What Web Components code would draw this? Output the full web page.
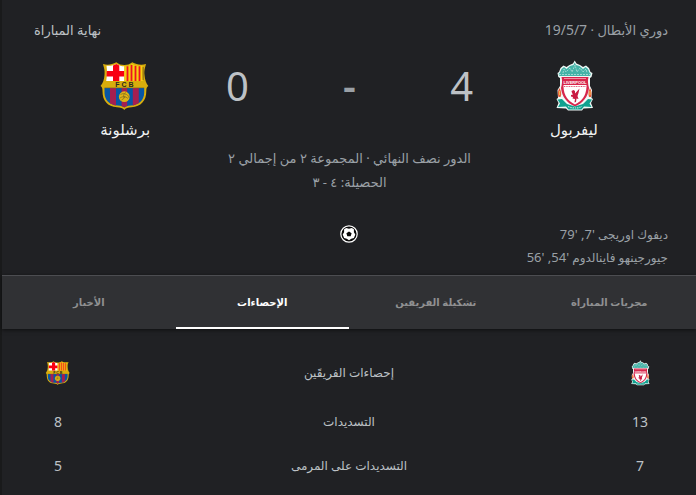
<!DOCTYPE html>
<html lang="ar" dir="rtl">
<head>
<meta charset="utf-8">
<title>ليفربول - برشلونة</title>
<style>
  body { margin: 0; background: #202124; color: #bdc1c6; font: 14px/24px "Noto Sans", "DejaVu Sans", sans-serif; }
</style>
</head>
<body>
<match-card>
  <match-header>
    <a slot="league" href="#league">دوري الأبطال</a>
    <span slot="date">19/5/7</span>
    <span slot="status">نهاية المباراة</span>
    <match-team slot="home" crest="liverpool">ليفربول</match-team>
    <span slot="home-score">4</span>
    <span slot="away-score">0</span>
    <match-team slot="away" crest="barcelona">برشلونة</match-team>
    <span slot="stage">الدور نصف النهائي · المجموعة ٢ من إجمالي ٢</span>
    <span slot="aggregate">الحصيلة: ٤ - ٣</span>
  </match-header>
  <goal-list>
    <goal-entry>ديفوك اوريجى <span slot="minutes">'7, '79</span></goal-entry>
    <goal-entry>جيورجينهو فاينالدوم <span slot="minutes">'54, '56</span></goal-entry>
  </goal-list>
  <tab-bar>
    <tab-item>مجريات المباراة</tab-item>
    <tab-item>تشكيلة الفريقين</tab-item>
    <tab-item active>الإحصاءات</tab-item>
    <tab-item>الأخبار</tab-item>
  </tab-bar>
  <team-stats></team-stats>
</match-card>

<script>
const define = (name, html, setup) => customElements.define(name, class extends HTMLElement {
  constructor() {
    super();
    this.attachShadow({ mode: "open" }).innerHTML = html;
  }
  connectedCallback() { if (setup) setup(this, this.shadowRoot); }
});

const crests = {
  barcelona: `<svg viewBox="0 0 52 52" role="img" aria-label="برشلونة">
    <defs><clipPath id="b"><path d="M5.5 27.5H45.2V33C45 40 40 45 32 45.6 28 46 26.500 46.500 25.300 47.500 24 46.500 22.500 46 18.700 45.600 10.500 45 5.700 40 5.500 33Z"/></clipPath></defs>
    <path d="M4 4C9 5.500 13 4.500 17.300 2.300 20 4.500 22 5 25.300 5 28.500 5 30.500 4.500 33.300 2.300 37.500 4.500 42 5.500 47 4 46 8 45 10 45.500 15 46 20 47 23 49.300 26 48 27 47.300 28 47.300 31 47.300 41 42 46.500 32.500 47.200 29 47.500 26.500 48 25.300 50 24 48 21.500 47.500 18 47.200 8.500 46.500 3.500 41 3.500 31 3.500 28 3 27 1.500 26 4 23 5 20 5.500 15 6 10 5 8 4 4Z" fill="#d8ad0c"/>
    <path d="M7.500 5.700C11.500 6.200 14.500 5.300 17.500 4 20 5.800 22.500 6.300 25.300 6.300V21H7.200C8 16 8.300 10 7.500 5.700Z" fill="#fff"/>
    <path d="M14 5.400 17.500 4 20.300 5.500V21H14ZM7.800 11H25.300V16.500H7.500Z" fill="#f80012"/>
    <path d="M25.300 6.300C28.500 6.300 31 5.500 33.200 4 36.500 5.500 40 6.200 43.500 5.700 42.800 10 43 16 43.800 21H25.300Z" fill="#f5cf13"/>
    <path d="M28.500 6.200V21M32.500 5V21M36.500 5.700V21M40.500 6.300V21" stroke="#ed1220" stroke-width="1.800"/>
    <path d="M44.200 7V20" stroke="#765c14" stroke-width=".800"/>
    <text x="25.500" y="27" text-anchor="middle" font-family="Liberation Sans, sans-serif" font-size="7" font-weight="700" fill="#292b20" direction="ltr">F C B</text>
    <g clip-path="url(#b)"><path d="M4 28H47V48H4Z" fill="#0756a5"/><path d="M11 28h6v20h-6zM22.600 28h5.600v20h-5.600zM33.800 28h6v20h-6z" fill="#a51f50"/></g>
    <path d="M5.500 27.800H45.200" stroke="#796b21" stroke-width=".600"/>
    <circle cx="25.300" cy="36.700" r="5.400" fill="#dfb414"/>
    <path d="M21.500 34.500Q24 32.500 27.500 34.500T30 38M21 38Q25 35 29 38.500M22.500 40Q26 38.500 26 36M27 32.500Q23.500 34 25 38" fill="none" stroke="#806b20" stroke-width=".700"/>
  </svg>`,
  liverpool: `<svg viewBox="0 0 52 52" role="img" aria-label="ليفربول">
    <path d="M25 3.500 26.700.500 28.500 3.500 32 5 35 7 38 5.500 41 8 42.500 12 44.500 13 43.500 17 42 18V26L44 30 43.500 38 45 39 43 43 45 48 35.500 48.500 34 50.500H20L18 48.500 8.500 48 10.500 43 8.500 39 10 38 9.500 30 12 26V18L10.300 17 9.500 13 11 12 12.500 8 15.500 5.500 18.500 7 21.500 5Z" fill="#eff9f7"/>
    <path d="M12 12.500 13.500 9 16 7 18.500 9 22 6 25.500 5 26.700 2.500 28 5 31.500 6 35 9 37.500 7 40 9 41.500 12.500 43 14 42 16H11.500L10.500 14Z" fill="#45b3a8"/>
    <path d="M15 13 16 9 18 12 22 8 24 12 27 5 29 12 32 8 35 12 38 9 39 13M11 14.500H42.500" fill="none" stroke="#c5e8e3" stroke-width=".700" stroke-dasharray="2 1"/>
    <path d="M13.500 17H40.500C39.500 21 40 24 41 28 40 37 35 43 27 46.500 19 43 14 37 13 28 14 24 14.500 21 13.500 17Z" fill="#d7264c"/>
    <path d="M15.500 27H38.500C38 36 34 41 27 44.500 20 41 16 36 15.500 27Z" fill="#fff"/>
    <path d="M15.500 26H38.500" stroke="#fff" stroke-width="2"/><path d="M16 26.500H38" stroke="#d7264c" stroke-width=".800" stroke-dasharray="1 .700"/>
    <path d="M16 18.500H38" stroke="#f5abb9" stroke-width=".800"/>
    <text x="27" y="24" text-anchor="middle" font-family="Liberation Sans, sans-serif" font-size="4" font-weight="700" fill="#fff" direction="ltr">LIVERPOOL</text>
    <path d="M31.500 28.500 30.500 33 29.500 36 30.500 39 28.500 38.500 28 42 26.500 42.500 27 39 24.500 38.500 25 37 23 36.500 23 35 25 34.500 24 33 23.500 31 25.500 30 27 31 27 33.500Z" fill="#c91a42"/>
    <path d="M11.500 28C9.500 31 9.500 34 10.500 37H12.500C14 34 13 31 11.500 28ZM42 28C40.500 31 40 34 41 37H43C44 34 43.500 31 42 28Z" fill="#e85b3b"/>
    <path d="M11.500 31V35M42 31V35" stroke="#f5b650" stroke-width="1.200"/>
    <path d="M9.500 39.500 14 39 19 44 26.800 46.500 35 44 40 39 44 39.500 41.500 43.500 43.500 47 36 46.500 33.500 49.500H20.500L18 46.500 10 47 12 43.500Z" fill="#10a18f"/>
    <path d="M20 46.500Q27 49.500 34 46.500" fill="none" stroke="#bae3dc" stroke-width="1.200" stroke-dasharray="1.500 .800"/>
  </svg>`
};

define("match-card", `<style>
  :host { display: block; min-height: 100vh; box-sizing: border-box; border-left: 2px solid #191a1b; background: #202124; }
</style><slot></slot>`);

define("team-crest", `<style>
  :host { display: block; width: 52px; height: 52px; }
  :host([small]) { width: 26px; height: 26px; }
  svg { display: block; width: 100%; height: 100%; }
</style><div></div>`, (el, root) => { root.querySelector("div").innerHTML = crests[el.getAttribute("team")]; });

define("match-team", `<style>
  :host { display: flex; flex-direction: column; align-items: center; gap: 5px; color: #f1f3f4; font-size: 15px; line-height: 24px; }
</style><team-crest></team-crest><span><slot></slot></span>`, (el, root) => {
  const old = root.querySelector("team-crest");
  const crest = document.createElement("team-crest");
  crest.setAttribute("team", el.getAttribute("crest"));
  old.replaceWith(crest);
});

define("match-header", `<style>
  :host { display: block; padding: 18px 28px 0 32px; font-size: 13px; }
  .meta { display: flex; justify-content: space-between; color: #9aa0a6; }
  .date { font-size: 14px; }
  .status { color: #bdc1c6; }
  ::slotted(a) { color: inherit; text-decoration: none; }
  .score { display: grid; grid-template-columns: 13fr 3fr 13fr 3fr 13fr; margin: 18px 3px 0 0; justify-items: center; }
  .num { font-size: 40px; line-height: 52px; }
  .dash { color: #9aa0a6; font-weight: 600; }
  .stage { margin: 5px 3px 0 0; display: flex; flex-direction: column; align-items: center; color: #9aa0a6; }
</style>
<div class="meta"><div><slot name="league"></slot> · <span class="date"><slot name="date"></slot></span></div><div class="status"><slot name="status"></slot></div></div>
<div class="score">
  <slot name="home"></slot>
  <div class="num"><slot name="home-score"></slot></div>
  <div class="num dash">-</div>
  <div class="num"><slot name="away-score"></slot></div>
  <slot name="away"></slot>
</div>
<div class="stage"><slot name="stage"></slot><slot name="aggregate"></slot></div>`);

define("goal-entry", `<style>
  :host { display: block; font-size: 12px; line-height: 23px; }
  .minutes { font-size: 13px; }
</style><slot></slot><span class="minutes"><slot name="minutes"></slot></span>`);

define("goal-list", `<style>
  :host { display: grid; grid-template-columns: 1fr 18px 1fr; padding: 29px 28px 6px; color: #9aa0a6; }
  div { display: flex; flex-direction: column; }
  svg { display: block; width: 18px; height: 18px; margin-top: 2px; }
</style>
<div><slot></slot></div>
<svg viewBox="0 0 18 18" role="img" aria-label="هدف">
  <circle cx="9" cy="9" r="8.200" fill="#080808" stroke="#fff" stroke-width="1.200"/>
  <path d="M9 3.800 11.800 2.900 13.900 4.300 13.900 7.200 15.300 9.500 13.900 12.900 11.300 13.800 9 15.300 6.700 13.800 4.100 12.900 2.700 9.500 4.100 7.200 4.100 4.300 6.200 2.900Z" fill="#fff"/>
  <path d="M9 6.400 11.600 8.200 10.700 11.200H7.300L6.400 8.200Z" fill="#080808"/>
</svg>`);

define("tab-bar", `<style>
  :host { display: block; position: relative; border-top: 1px solid #4c4d51; background: #303134; box-shadow: 0 1px 4px rgba(0,0,0,.6); }
  div { display: grid; grid-template-columns: repeat(4, 1fr); }
</style><div role="tablist"><slot></slot></div>`);

define("tab-item", `<style>
  :host { display: block; }
  button { display: block; box-sizing: border-box; width: 100%; height: 53px; padding: 0; border: 0; border-bottom: 2px solid transparent; background: none; color: #8f9091; font: inherit; font-size: 10px; line-height: 20px; font-weight: 700; cursor: pointer; }
  :host([active]) button { color: #fff; border-bottom-color: #fff; }
</style><button type="button" role="tab"><slot></slot></button>`, (el, root) => {
  root.querySelector("button").setAttribute("aria-selected", String(el.hasAttribute("active")));
});

define("team-stats", `<style>
  :host { display: block; padding: 17px 16px 0; }
  table { width: 100%; table-layout: fixed; border-collapse: collapse; }
  th, td { height: 44px; padding: 0; text-align: center; font-weight: 400; }
  th { font-size: 12px; }
  thead th { height: 54px; }
  .side { width: 80px; }
  team-crest { margin: 0 auto; }
</style>
<table>
  <thead><tr><th class="side"><team-crest small team="liverpool"></team-crest></th><th>إحصاءات الفريقَين</th><th class="side"><team-crest small team="barcelona"></team-crest></th></tr></thead>
  <tbody>
    <tr><td>13</td><th scope="row">التسديدات</th><td>8</td></tr>
    <tr><td>7</td><th scope="row">التسديدات على المرمى</th><td>5</td></tr>
  </tbody>
</table>`);
</script>
</body>
</html>
